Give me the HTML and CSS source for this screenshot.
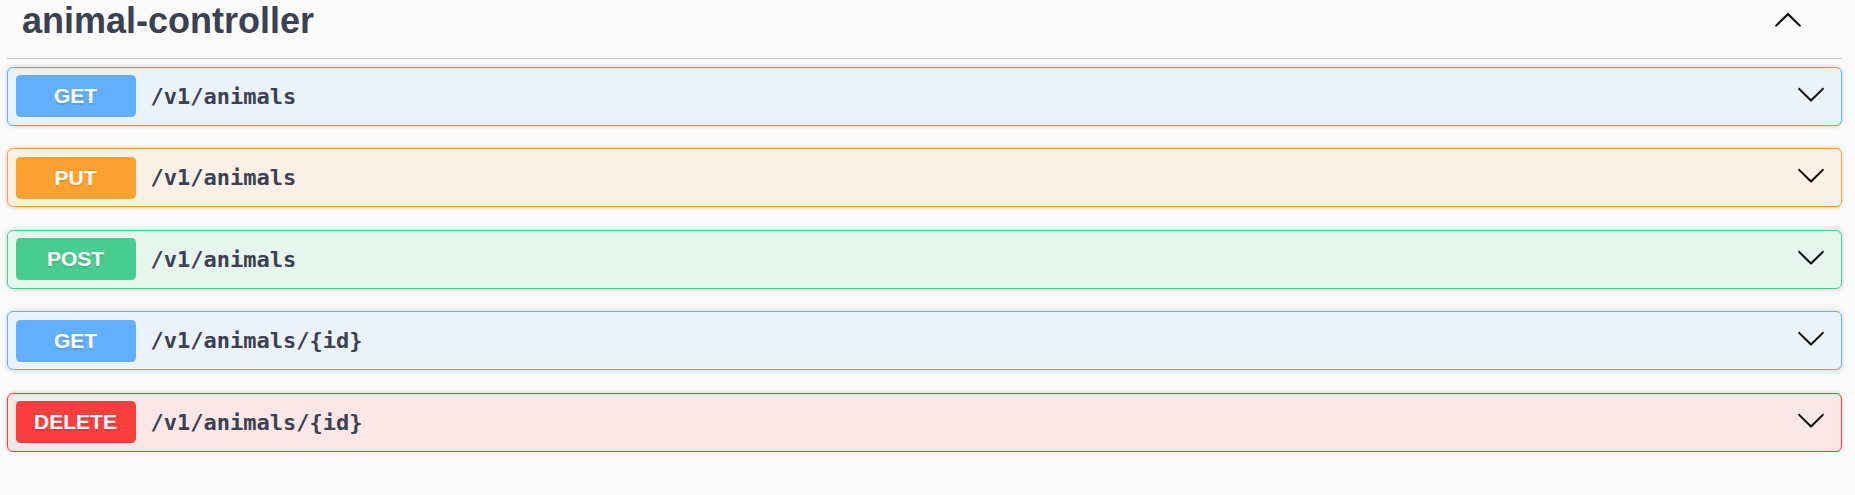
FILE: index.html
```html
<!DOCTYPE html>
<html>
<head>
<meta charset="utf-8">
<link rel="stylesheet" href="styles.css">
</head>
<body>
<div class="section">
  <div class="tag">
    <h3 class="tag-title">animal-controller</h3>
    <button class="tag-toggle" aria-label="collapse">
      <svg width="30" height="30" viewBox="0 0 20 20"><path d="M17.418 14.908c.272.268.709.268.979 0s.271-.701 0-.969l-7.908-7.83c-.27-.268-.707-.268-.979 0l-7.908 7.830c-.27.268-.27.701 0 .969.271.268.709.268.979 0L10 7.767l7.418 7.141z"/></svg>
    </button>
  </div>
  <div class="ops">
    <div class="op op-get">
      <span class="badge">GET</span>
      <span class="path">/v1/animals</span>
      <svg class="arrow" width="30" height="30" viewBox="0 0 20 20"><path d="M17.418 6.109c.272-.268.709-.268.979 0s.271.701 0 .969l-7.908 7.83c-.27.268-.707.268-.979 0l-7.908-7.83c-.27-.268-.27-.701 0-.969.271-.268.709-.268.979 0L10 13.25l7.418-7.141z"/></svg>
    </div>
    <div class="op op-put">
      <span class="badge">PUT</span>
      <span class="path">/v1/animals</span>
      <svg class="arrow" width="30" height="30" viewBox="0 0 20 20"><path d="M17.418 6.109c.272-.268.709-.268.979 0s.271.701 0 .969l-7.908 7.83c-.27.268-.707.268-.979 0l-7.908-7.83c-.27-.268-.27-.701 0-.969.271-.268.709-.268.979 0L10 13.25l7.418-7.141z"/></svg>
    </div>
    <div class="op op-post">
      <span class="badge">POST</span>
      <span class="path">/v1/animals</span>
      <svg class="arrow" width="30" height="30" viewBox="0 0 20 20"><path d="M17.418 6.109c.272-.268.709-.268.979 0s.271.701 0 .969l-7.908 7.83c-.27.268-.707.268-.979 0l-7.908-7.83c-.27-.268-.27-.701 0-.969.271-.268.709-.268.979 0L10 13.25l7.418-7.141z"/></svg>
    </div>
    <div class="op op-get">
      <span class="badge">GET</span>
      <span class="path">/v1/animals/{id}</span>
      <svg class="arrow" width="30" height="30" viewBox="0 0 20 20"><path d="M17.418 6.109c.272-.268.709-.268.979 0s.271.701 0 .969l-7.908 7.83c-.27.268-.707.268-.979 0l-7.908-7.83c-.27-.268-.27-.701 0-.969.271-.268.709-.268.979 0L10 13.25l7.418-7.141z"/></svg>
    </div>
    <div class="op op-delete">
      <span class="badge">DELETE</span>
      <span class="path">/v1/animals/{id}</span>
      <svg class="arrow" width="30" height="30" viewBox="0 0 20 20"><path d="M17.418 6.109c.272-.268.709-.268.979 0s.271.701 0 .969l-7.908 7.83c-.27.268-.707.268-.979 0l-7.908-7.83c-.27-.268-.27-.701 0-.969.271-.268.709-.268.979 0L10 13.25l7.418-7.141z"/></svg>
    </div>
  </div>
</div>
</body>
</html>
```
FILE: styles.css
```css
html, body {
  margin: 0;
  padding: 0;
  background: #fafafa;
}
body {
  font-family: "Liberation Sans", Arial, sans-serif;
  color: #3b4151;
}
.section {
  padding: 0 13px 0 7px;
}
.tag {
  display: flex;
  align-items: center;
  padding: 0 39px 16px 15px;
  border-bottom: 1px solid rgba(59, 65, 81, 0.3);
  margin-bottom: 7.5px;
}
.tag-title {
  flex: 1;
  margin: 0;
  font-size: 36px;
  line-height: 42px;
  font-weight: 700;
  color: #3b4151;
}
.tag-toggle {
  border: 0;
  background: none;
  padding: 0;
  width: 30px;
  height: 30px;
  margin-bottom: 4px;
  display: flex;
  fill: #111;
}
.ops {
  display: flex;
  flex-direction: column;
  gap: 22.5px;
}
.op {
  display: flex;
  align-items: center;
  padding: 7.5px;
  border: 1px solid;
  border-radius: 6px;
  box-shadow: 0 0 4.5px rgba(0, 0, 0, 0.19);
}
.badge {
  min-width: 120px;
  height: 42px;
  line-height: 42px;
  text-align: center;
  border-radius: 4.5px;
  color: #fff;
  font-size: 21px;
  font-weight: 700;
  text-shadow: 0 1.5px 0 rgba(0, 0, 0, 0.1);
}
.path {
  flex: 1;
  padding: 0 15px;
  font-family: "DejaVu Sans Mono", monospace;
  font-weight: 700;
  font-size: 22px;
  color: #3b4151;
}
.arrow {
  fill: #111;
  margin-right: 8px;
  margin-bottom: 5px;
}
.op-get { background: rgba(97, 175, 254, 0.1); border-color: #61affe; }
.op-get .badge { background: #61affe; }
.op-put { background: rgba(252, 161, 48, 0.1); border-color: #fca130; }
.op-put .badge { background: #fca130; }
.op-post { background: rgba(73, 204, 144, 0.1); border-color: #49cc90; }
.op-post .badge { background: #49cc90; }
.op-delete { background: rgba(249, 62, 62, 0.1); border-color: #f93e3e; }
.op-delete .badge { background: #f93e3e; }
```
